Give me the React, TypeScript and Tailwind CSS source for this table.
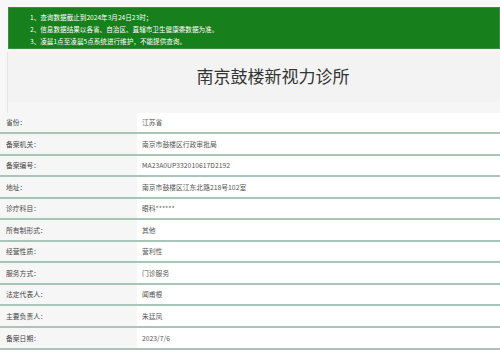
import React from "react";

const rows: { label: string; value: string; h: string }[] = [
  { label: "省份：", value: "江苏省", h: "h-[21px]" },
  { label: "备案机关：", value: "南京市鼓楼区行政审批局", h: "h-[22px]" },
  { label: "备案编号：", value: "MA23A0UP332010617D2192", h: "h-[21px]" },
  { label: "地址：", value: "南京市鼓楼区江东北路218号102室", h: "h-[22px]" },
  { label: "诊疗科目：", value: "眼科******", h: "h-[21px]" },
  { label: "所有制形式：", value: "其他", h: "h-[22px]" },
  { label: "经营性质：", value: "营利性", h: "h-[21px]" },
  { label: "服务方式：", value: "门诊服务", h: "h-[22px]" },
  { label: "法定代表人：", value: "闻甫根", h: "h-[21px]" },
  { label: "主要负责人：", value: "朱廷凤", h: "h-[22px]" },
  { label: "备案日期：", value: "2023/7/6", h: "h-[22px]" },
];

export default function App() {
  return (
    <div className="w-[500px] h-[350px] overflow-hidden bg-[#f7f7f7] font-['Noto_Sans_CJK_SC','Noto_Sans',sans-serif]">
      <div className="h-[7px]" />
      <div className="ml-[8px] h-[42px] bg-[#177f1b] border border-[#3a8f3c] pl-[21px] pt-[3px] text-white text-[6.6px] leading-[12px]">
        <p>1、查询数据截止到2024年3月24日23时；</p>
        <p>2、信息数据结果以各省、自治区、直辖市卫生健康委数据为准。</p>
        <p>3、凌晨1点至凌晨5点系统进行维护，不能提供查询。</p>
      </div>
      <div className="h-[3px]" />
      <div className="ml-[7px] border-l border-[#e4e4e4] w-[540px]">
        <div className="h-[50px] bg-[#f3f3f3] flex items-center justify-center w-[530px] text-[17px] text-[#333] pb-[2px]">
          南京鼓楼新视力诊所
        </div>
        <div className="h-[11px] bg-[#f6f6f6]" />
      </div>
      <div className="flex flex-col">
        {rows.map((r) => (
          <div key={r.label} className={`${r.h} flex border-b-2 border-[#a8c6b8]`}>
            <div className="w-[137px] bg-[#f6f6f6] pl-[6px] flex items-center text-[6.8px] text-[#444]">
              {r.label}
            </div>
            <div className="flex-1 bg-white pl-[5px] flex items-center text-[6.8px] text-[#555]">
              {r.value}
            </div>
          </div>
        ))}
      </div>
    </div>
  );
}
